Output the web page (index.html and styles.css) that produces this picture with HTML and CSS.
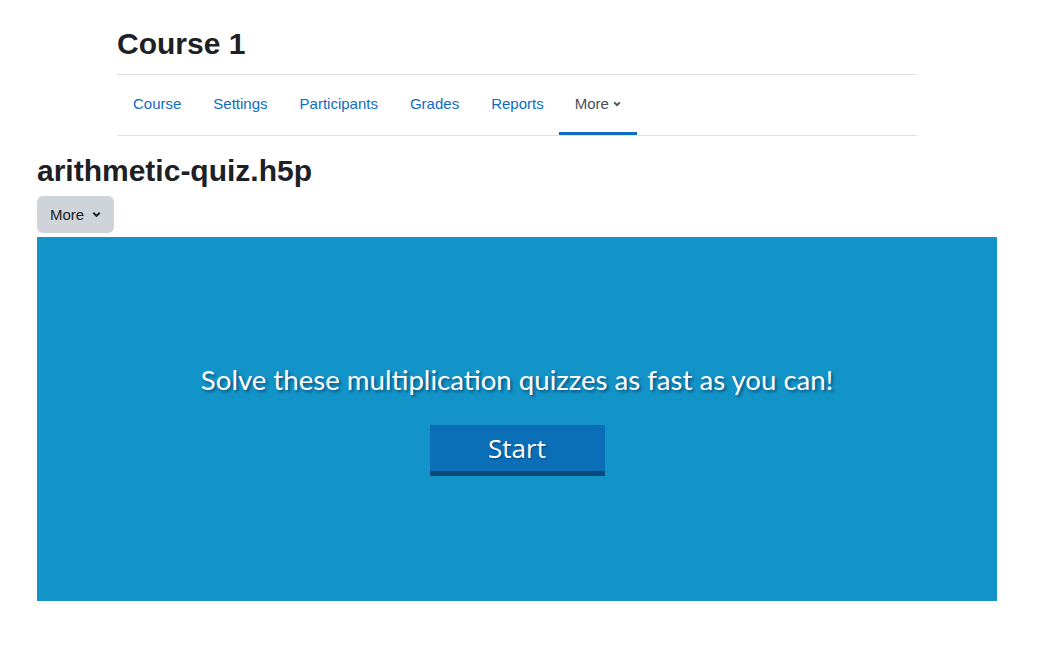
FILE: index.html
```html
<!DOCTYPE html>
<html lang="en">
<head>
    <meta charset="UTF-8">
    <meta name="viewport" content="width=device-width, initial-scale=1.0">
    <title>arithmetic-quiz.h5p</title>
    <link rel="stylesheet" href="styles.css">
</head>
<body>
    <header class="course-header">
        <h2 class="course-title">Course 1</h2>
        <nav class="secondary-nav">
            <a href="#" class="nav-link">Course</a>
            <a href="#" class="nav-link">Settings</a>
            <a href="#" class="nav-link">Participants</a>
            <a href="#" class="nav-link">Grades</a>
            <a href="#" class="nav-link">Reports</a>
            <a href="#" class="nav-link active">More
                <svg class="chevron" viewBox="0 0 10 10" width="8" height="8"><path d="M1.5 3 L5 6.5 L8.5 3" fill="none" stroke="currentColor" stroke-width="2.4"/></svg>
            </a>
        </nav>
    </header>

    <main class="activity">
        <h2 class="activity-title">arithmetic-quiz.h5p</h2>
        <button class="more-button">More
            <svg class="chevron" viewBox="0 0 10 10" width="9" height="9"><path d="M1.5 3 L5 6.5 L8.5 3" fill="none" stroke="currentColor" stroke-width="2.2"/></svg>
        </button>
        <div class="quiz">
            <p class="quiz-intro">Solve these multiplication quizzes as fast as you can!</p>
            <button class="start-button">Start</button>
        </div>
    </main>
</body>
</html>
```

FILE: styles.css
```css
body {
    font-family: "Liberation Sans", Arial, sans-serif;
    margin: 0;
    background-color: #fff;
    color: #1d2125;
}

.course-header {
    width: 800px;
    margin: 0 0 0 117px;
    padding-top: 26px;
}

.course-title,
.activity-title {
    font-size: 30px;
    font-weight: bold;
    line-height: 36px;
    margin: 0;
}

.course-title {
    margin-bottom: 12px;
}

.secondary-nav {
    display: flex;
    border-top: 1px solid #dee2e6;
    border-bottom: 1px solid #dee2e6;
}

.nav-link {
    display: flex;
    align-items: center;
    gap: 4px;
    height: 57px;
    padding: 0 16px;
    border-bottom: 3px solid transparent;
    color: #0f6cbf;
    font-size: 15px;
    text-decoration: none;
}

.nav-link.active {
    color: #495057;
    border-bottom-color: #0f6cbf;
    margin-left: -1px;
}

.activity {
    padding: 17px 0 0 37px;
    width: 960px;
}

.more-button {
    display: flex;
    align-items: center;
    gap: 8px;
    height: 37px;
    margin: 7px 0 4px;
    padding: 0 13px 1px;
    border: none;
    border-radius: 6px;
    background-color: #ced4da;
    color: #1d2125;
    font-family: "Liberation Sans", Arial, sans-serif;
    font-size: 15px;
}

.quiz {
    height: 364px;
    background-color: #1394c8;
    display: flex;
    flex-direction: column;
    align-items: center;
    justify-content: center;
    font-family: Lato, "Open Sans", sans-serif;
    color: #fff;
}

.quiz-intro {
    margin: 0 0 29px;
    font-size: 27.6px;
    text-shadow: 2px 2px 3px rgba(0, 40, 80, 0.6);
}

.start-button {
    width: 175px;
    height: 51px;
    border: none;
    border-bottom: 5px solid #084a7a;
    background-color: #0b6fb8;
    color: #fff;
    font-family: "Open Sans", Lato, sans-serif;
    font-size: 26px;
    text-shadow: 1px 1px 2px rgba(0, 30, 60, 0.5);
    padding: 0;
}
```
